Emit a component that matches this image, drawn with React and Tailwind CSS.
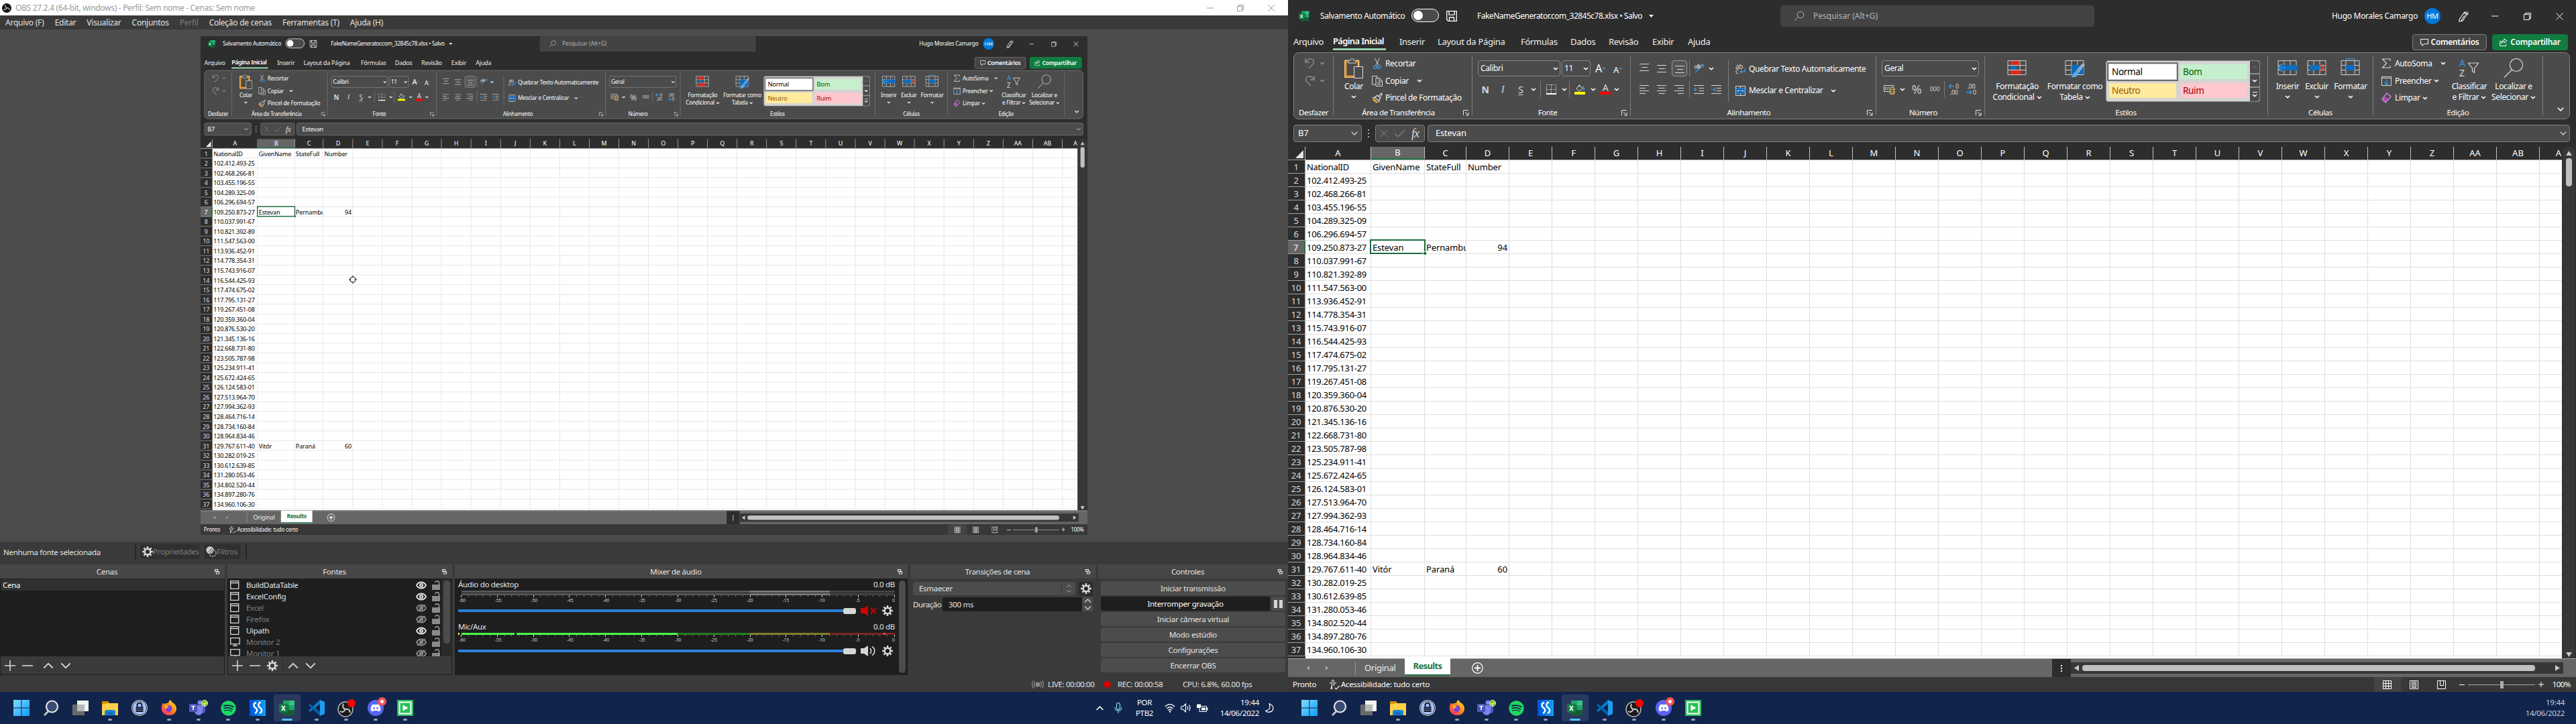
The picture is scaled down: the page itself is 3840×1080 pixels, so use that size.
import React from "react";
import { FaDiscord, FaSpotify } from "react-icons/fa";

const IDS = [
  "NationalID", "102.412.493-25", "102.468.266-81", "103.455.196-55", "104.289.325-09", "106.296.694-57",
  "109.250.873-27", "110.037.991-67", "110.821.392-89", "111.547.563-00", "113.936.452-91", "114.778.354-31",
  "115.743.916-07", "116.544.425-93", "117.474.675-02", "117.795.131-27", "119.267.451-08", "120.359.360-04",
  "120.876.530-20", "121.345.136-16", "122.668.731-80", "123.505.787-98", "125.234.911-41", "125.672.424-65",
  "126.124.583-01", "127.513.964-70", "127.994.362-93", "128.464.716-14", "128.734.160-84", "128.964.834-46",
  "129.767.611-40", "130.282.019-25", "130.612.639-85", "131.280.053-46", "134.802.520-44", "134.897.280-76",
  "134.960.106-30",
];
const EXTRA = {
  1: ["GivenName", "StateFull", "Number"],
  7: ["Estevan", "Pernambuco", "94"],
  31: ["Vitór", "Paraná", "60"],
};
const REST = "EFGHIJKLMNOPQRSTUVWXYZ".split("").concat(["AA", "AB"]);

/* ---------- small glyphs ---------- */

function Svg({ w = 16, h = 16, box, children, className = "" }) {
  return (
    <svg width={w} height={h} viewBox={box || `0 0 ${w} ${h}`} fill="none" className={"shrink-0 " + className}>
      {children}
    </svg>
  );
}
function Caret({ color = "#fff", className = "" }) {
  return (
    <Svg w={8} h={5} className={className}>
      <path d="M1 1l3 2.600L7 1" stroke={color} strokeWidth="1.600" />
    </Svg>
  );
}
function Chevron({ up, color = "#d0d0d0", w = 10, h = 6, sw = 1.3 }) {
  return (
    <Svg w={w} h={h} box="0 0 10 6">
      <path d={up ? "M.8 5.200L5 1l4.200 4.200" : "M.8.8L5 5 9.200.8"} stroke={color} strokeWidth={sw} />
    </Svg>
  );
}
function Launcher() {
  return (
    <Svg w={9} h={9}>
      <path d="M.5 8V.5H8M3 3l4.500 4.500M8 4v4H4" stroke="#e8e8e8" />
    </Svg>
  );
}
function Undo({ flip }) {
  return (
    <Svg w={15} h={17} className={flip ? "-scale-x-100" : ""}>
      <path d="M1 1v6h6M1.500 6.500C4 2.500 8 .5 11 2.500c3 2 3 5.500.5 8L6 16" stroke="#8e8e8e" strokeWidth="1.400" />
    </Svg>
  );
}
function ExcelIcon({ s = 16 }) {
  return (
    <Svg w={s} h={s} box="0 0 24 24">
      <path d="M6 1h17v22H6z" fill="#185c37" />
      <path d="M6 1h9v7H6z" fill="#21a366" /><path d="M15 1h8v7h-8z" fill="#33c481" />
      <path d="M15 8h8v7h-8z" fill="#21a366" /><path d="M6 8h9v7H6z" fill="#107c41" />
      <rect y="6" width="13" height="13" rx="1" fill="#107c41" />
      <path d="M4 9l5 7M9 9l-5 7" stroke="#fff" strokeWidth="1.800" />
    </Svg>
  );
}
function AlignLines({ kind }) {
  const d = {
    top: "M0 1.500h14M3 6.500h9M0 11.500h14",
    left: "M0 .5h14M0 4.500h9M0 8.500h14M0 12.500h9",
    center: "M0 .5h14M2.500 4.500h9M0 8.500h14M2.500 12.500h9",
    right: "M0 .5h14M5 4.500h9M0 8.500h14M5 12.500h9",
  }[kind];
  return <Svg w={14} h={13}><path d={d} stroke="#d8d8d8" /></Svg>;
}
function IndentIcon({ right }) {
  return (
    <Svg w={15} h={14}>
      <path d="M0 1.500h15M8 5.500h7M8 9.500h7M0 13.500h15" stroke="#d8d8d8" />
      <path d={right ? "M0 7.500h6M4 5l2.500 2.500L4 10" : "M6.500 7.500h-6M3 5L.5 7.500 3 10"} stroke="#3a96dd" strokeWidth="1.200" />
    </Svg>
  );
}
function TableGrid({ children, w = 30, h = 28 }) {
  return (
    <Svg w={w} h={h}>
      <path d="M1 3.500h27v21H1zM1 10.500h27M1 17.500h27M10 3.500v21M19 3.500v21" stroke="#d0d0d0" />
      {children}
    </Svg>
  );
}
function Popout() {
  return (
    <Svg w={9} h={9}>
      <path d="M1.500 1.500h4v3h-4zM3.500 4.500h4v3.500h-4z" stroke="#d6d6d6" strokeWidth="1.200" />
      <path d="M1 1h5v1.500H1zM3 4h5v1.500H3z" fill="#d6d6d6" />
    </Svg>
  );
}
function Gear({ s = 16 }) {
  return (
    <Svg w={s} h={s} box="0 0 16 16">
      <circle cx="8" cy="8" r="4.300" stroke="#d6d6d6" strokeWidth="2.400" />
      <path d="M8 0v3M8 13v3M0 8h3M13 8h3M2.400 2.400l2 2M11.600 11.600l2 2M13.600 2.400l-2 2M4.400 11.600l-2 2" stroke="#d6d6d6" strokeWidth="2.600" />
    </Svg>
  );
}

/* ---------- Excel ---------- */

function TitleBar() {
  return (
    <div className="flex h-12 items-center pl-4 text-[12px] tracking-[-0.38px] text-white">
      <ExcelIcon />
      <span className="ml-4 w-[136px]">Salvamento Automático</span>
      <span className="mt-[-2px] flex h-5 w-[41px] items-center rounded-full border border-white bg-[#4a4a4a] pl-[2px]">
        <i className="h-[14px] w-[14px] rounded-full bg-white" />
      </span>
      <Svg className="ml-[11px]">
        <path d="M.7.7h14.600v14.600H2.700l-2-2zM4 .7v5.500h8V.7M4.500 15v-5h7v5" stroke="#fff" strokeWidth="1.300" />
      </Svg>
      <span className="ml-[30px] w-[254px] tracking-[-0.5px]">FakeNameGenerator.com_32845c78.xlsx • Salvo</span>
      <Svg w={7} h={4} className="ml-[2px]"><path d="M0 0h7L3.500 4z" fill="#fff" /></Svg>
      <div className="ml-[189px] flex h-8 w-[468px] items-center rounded bg-[#434343] pl-[20px] tracking-normal text-[#b4b4b4]">
        <Svg w={16} h={16}>
          <circle cx="10" cy="6" r="4.800" stroke="#b4b4b4" /><path d="M6.500 9.500L1 15" stroke="#b4b4b4" />
        </Svg>
        <span className="ml-[13px] text-[12px]">Pesquisar (Alt+G)</span>
      </div>
      <span className="ml-[354px] w-[138px] tracking-[-0.3px]">Hugo Morales Camargo</span>
      <span className="flex h-6 w-6 items-center justify-center rounded-full bg-[#0078d7] text-[11px]">HM</span>
      <Svg w={17} h={17} className="ml-[26px]">
        <path d="M2 13L9 3l4 3-6 9-5 1zM9 3l2-1 4 3-2 1M14 1v1M16 3h-1M4 16l6-9" stroke="#fff" strokeWidth="1.100" />
      </Svg>
      <Svg w={10} h={2} className="ml-[33px]"><path d="M0 1h10" stroke="#fff" /></Svg>
      <Svg w={11} h={11} className="ml-[38px]">
        <path d="M.5 2.500h8v8h-8zM2.500 2V.5h8v8H9" stroke="#fff" />
      </Svg>
      <Svg w={11} h={11} className="ml-[37px]"><path d="M.5.5l10 10M10.500.5l-10 10" stroke="#fff" /></Svg>
    </div>
  );
}

function RibbonTabs() {
  return (
    <div className="flex h-[30px] items-center pl-2 text-[13px] tracking-[-0.3px] text-[#f0f0f0]">
      <span className="w-[59px]">Arquivo</span>
      <span className="flex h-[27px] w-[79px] items-center self-start border-b-[3px] border-[#94d1ab] pt-[4px] font-semibold tracking-[-0.65px] text-white whitespace-nowrap">Página Inicial</span>
      <span className="ml-5 w-[57px]">Inserir</span>
      <span className="w-[124px]">Layout da Página</span>
      <span className="w-[74px]">Fórmulas</span>
      <span className="w-[57px]">Dados</span>
      <span className="w-[65px]">Revisão</span>
      <span className="w-[53px]">Exibir</span>
      <span>Ajuda</span>
      <div className="ml-auto mr-[12px] flex gap-2 self-start pt-[3px] text-[12px] font-semibold tracking-[-0.3px] text-white">
        <span className="flex h-6 w-[111px] items-center justify-center gap-1 rounded border border-[#7d7d7d] bg-[#444]">
          <Svg w={12} h={12}><path d="M.5 1.500h11v7H6l-3 3v-3H.5z" stroke="#fff" /></Svg>Comentários
        </span>
        <span className="flex h-6 w-[113px] items-center justify-center gap-1 rounded bg-[#107c41]">
          <Svg w={12} h={12}><path d="M3 4.500H.7v7h9V9M7 1l4 3-4 3V5C5 5 4 6 3 8c0-3 1.500-5 4-5z" stroke="#fff" /></Svg>Compartilhar
        </span>
      </div>
    </div>
  );
}

function Group({ label, className, launcher, shift = "", children }) {
  return (
    <div className={"flex h-[98px] shrink-0 flex-col " + className}>
      <div className="flex h-[80px]">{children}</div>
      <div className="flex h-[18px] items-center justify-center text-[11.5px] tracking-[-0.42px]">
        <span className={"flex-1 text-center " + shift}>{label}</span>
        {launcher && <span className="mr-[4px]"><Launcher /></span>}
      </div>
    </div>
  );
}
function Divider() {
  return <div className="mt-1 h-[89px] w-px shrink-0 bg-[#7c7c7c]" />;
}
function Small({ icon, text, caret, gap = "ml-2" }) {
  return (
    <div className="flex h-[26px] items-center whitespace-nowrap">
      <span className="flex w-5 shrink-0">{icon}</span>
      {text}
      {caret && <Caret className={gap} />}
    </div>
  );
}
function Big({ icon, lines, caretInline, className }) {
  return (
    <div className={"flex shrink-0 flex-col items-center whitespace-nowrap pt-[8px] " + className}>
      <div className="flex h-[34px] items-start">{icon}</div>
      <div className="h-[16px] leading-[16px]">{lines[0]}</div>
      {caretInline ? (
        <div className="flex h-[16px] items-center gap-[3px] leading-[16px]">{lines[1]}<Caret /></div>
      ) : (
        <div className="pt-[5px]"><Caret /></div>
      )}
    </div>
  );
}
function Combo({ text, className }) {
  return (
    <div className={"flex h-6 shrink-0 items-center justify-between rounded border border-[#858585] pl-[3px] pr-[2px] " + className}>
      {text}<Caret />
    </div>
  );
}
function Vr() {
  return <i className="h-6 w-px shrink-0 bg-[#7c7c7c]" />;
}
function Cell({ w, children }) {
  return <span className={"flex shrink-0 items-center justify-center " + w}>{children}</span>;
}

function Ribbon() {
  return (
    <div className="ml-2 flex h-[100px] w-[1903px] rounded-lg border border-[#808080] bg-[#4b4b4b] text-[12px] tracking-[-0.36px] text-white">
      <Group label="Desfazer" className="w-[58px]">
        <div className="flex flex-col gap-[9px] pl-4 pt-[7px]">
          <div className="flex items-center gap-[7px]"><Undo /><Caret color="#8e8e8e" /></div>
          <div className="flex items-center gap-[7px]"><Undo flip /><Caret color="#8e8e8e" /></div>
        </div>
      </Group>
      <Divider />
      <Group label="Área de Transferência" launcher className="w-[206px]">
        <Big className="ml-[8px] w-[44px]" lines={["Colar"]} icon={
          <Svg w={28} h={30}>
            <path d="M2 4.500h19V27H2z" stroke="#e8962e" strokeWidth="3" />
            <path d="M.6 3h20.800v9M.6 3v25.500H14" stroke="#f5cd84" />
            <path d="M6 7V3h3c.5-3.500 4.500-3.500 5 0h3v4z" fill="#4b4b4b" stroke="#a8a8a8" strokeWidth="1.300" />
            <path d="M14.500 12.500h13v17h-13z" fill="#4b4b4b" stroke="#e0e0e0" />
          </Svg>
        } />
        <div className="ml-[5px] flex flex-col pt-[3px]">
          <Small text="Recortar" icon={
            <Svg><path d="M4.500 0l6 11M11.500 0l-6 11" stroke="#d0d0d0" /><circle cx="5" cy="13" r="2.200" stroke="#3a96dd" strokeWidth="1.300" /><circle cx="11" cy="13" r="2.200" stroke="#3a96dd" strokeWidth="1.300" /></Svg>
          } />
          <Small text="Copiar" caret gap="ml-3" icon={
            <Svg><path d="M6 13H.5V.5H8V3M6 3.500h5.500l4 4v8H6zM11 4v4h4M8 10h5M8 12.500h5" stroke="#d8d8d8" /></Svg>
          } />
          <Small text="Pincel de Formatação" icon={
            <Svg><path d="M2 8l7 6-2 2-6-5z" fill="#f0a33a" /><path d="M1 8l3-1 7 6-1.500 1.500M5 7l3-3 2 2 4-5 1.500 1.500-4 5 1.500 1-2.500 3" stroke="#e0e0e0" strokeWidth="1.200" /></Svg>
          } />
        </div>
      </Group>
      <Divider />
      <Group label="Fonte" launcher className="w-[235px]" shift="pl-[2px]">
        <div className="flex flex-col pt-[11px] pl-[8px]">
          <div className="flex items-center">
            <Combo text="Calibri" className="w-[123px]" />
            <Combo text="11" className="ml-[2px] w-[43px]" />
            <Cell w="w-[18px] ml-[6px]"><span className="text-[16px] leading-none">A</span><Chevron up color="#3a96dd" w={6} h={4} sw={2} /></Cell>
            <Cell w="w-[16px] ml-[9px]"><span className="pt-1 text-[13px] leading-none">A</span><Chevron color="#3a96dd" w={6} h={4} sw={2} /></Cell>
          </div>
          <div className="mt-[7px] flex h-6 items-center text-[14px] text-[#d8d8d8]">
            <Cell w="w-[22px] font-bold">N</Cell>
            <Cell w="w-[30px]"><em className="font-['Liberation_Serif',serif] text-[15px]">I</em></Cell>
            <Cell w="w-[24px] underline underline-offset-2">S</Cell>
            <Cell w="w-[13px]"><Caret /></Cell>
            <span className="w-[4px]" /><Vr />
            <Cell w="w-[30px]"><Svg w={15} h={15}><path d="M0 .5h15M.5 0v14M14.500 0v14M7.500 0v14M0 7.500h15" stroke="#d8d8d8" strokeDasharray="1 1" /><path d="M0 14h15" stroke="#fff" strokeWidth="2" /></Svg></Cell>
            <Cell w="w-[9px]"><Caret /></Cell>
            <span className="w-[3px]" /><Vr />
            <Cell w="w-[30px]"><Svg w={16} h={16}><path d="M3 7l4.500-5L12 7l-5 4.500zM7 1v4" stroke="#e0e0e0" /><path d="M12 4c2 1 2.500 3 2 6" stroke="#3a96dd" strokeWidth="2" /><path d="M0 12h16v4H0z" fill="#ff0" /></Svg></Cell>
            <Cell w="w-[10px]"><Caret /></Cell>
            <Cell w="w-[16px] ml-[5px] flex-col"><span className="text-[14px] leading-[12px]">A</span><i className="h-1 w-4 bg-[#f00]" /></Cell>
            <Cell w="w-[10px] ml-[4px]"><Caret /></Cell>
          </div>
        </div>
      </Group>
      <Divider />
      <Group label="Alinhamento" launcher className="w-[365px]">
        <div className="flex w-[145px] flex-col pl-[13px] pt-[11px]">
          <div className="flex items-center">
            <span className="mb-1 mr-[12px]"><AlignLines kind="top" /></span>
            <span className="mr-[8px]"><AlignLines kind="top" /></span>
            <span className="flex h-6 w-[23px] items-end justify-center rounded border border-[#9a9a9a] bg-[#555] pb-[3px]"><AlignLines kind="top" /></span>
            <span className="w-[3px]" /><Vr />
            <Svg w={18} h={16} className="ml-[6px]"><path d="M2 14L14 3M10 2.500h4.500V7" stroke="#3a96dd" strokeWidth="1.300" /><circle cx="3" cy="6" r="2" stroke="#d8d8d8" /><path d="M5 3l2 6M6 1l3 7" stroke="#d8d8d8" /><circle cx="8.500" cy="5" r="1.800" stroke="#d8d8d8" /></Svg>
            <Caret className="ml-[4px]" />
          </div>
          <div className="mt-[7px] flex h-6 items-center">
            <span className="mr-[12px]"><AlignLines kind="left" /></span>
            <span className="mr-[12px]"><AlignLines kind="center" /></span>
            <span className="mr-[8px]"><AlignLines kind="right" /></span>
            <Vr />
            <span className="ml-[6px] mr-[11px]"><IndentIcon /></span>
            <IndentIcon right />
          </div>
        </div>
        <i className="mt-[10px] h-[62px] w-px bg-[#7c7c7c]" />
        <div className="flex flex-col gap-[6px] pl-[10px] pt-[11px]">
          <Small text="Quebrar Texto Automaticamente" icon={
            <Svg w={15} h={16} className="overflow-visible"><text x="0" y="8" fontSize="10" fill="#d8d8d8">ab</text><text x="0" y="15" fontSize="10" fill="#d8d8d8">c</text><path d="M14 7v5H7M9.500 9.500L7 12l2.500 2.500" stroke="#3a96dd" strokeWidth="1.400" /></Svg>
          } />
          <Small text="Mesclar e Centralizar" caret gap="ml-[12px]" icon={
            <Svg w={15} h={15}><path d="M.5.5h14v14H.5zM7.500.5v3M7.500 11.500v3" stroke="#d8d8d8" /><path d="M1 3.500h13v8H1z" fill="#0f5fa8" stroke="#3a96dd" /><path d="M3 7.500h9M5 5.500l-2 2 2 2M10 5.500l2 2-2 2" stroke="#9cd0f5" /></Svg>
          } />
        </div>
      </Group>
      <Divider />
      <Group label="Número" launcher className="w-[161px]" shift="-ml-2">
        <div className="flex flex-col pl-[8px] pt-[11px]">
          <Combo text="Geral" className="w-[145px]" />
          <div className="mt-[7px] flex h-6 items-center text-[#c8c8c8]">
            <Svg w={18} h={16} className="ml-[3px]"><path d="M15 5V2.500H.5v9H8M4 5.500H2.500v3H4M6 5v4M9 5H7.500M12 5h1" stroke="#d8d8d8" /><path d="M9 7v7c0 2 7 2 7 0V7" fill="#4b4b4b" stroke="#f0c869" /><ellipse cx="12.500" cy="7" rx="3.500" ry="1.500" stroke="#f0c869" /><path d="M9 10c0 2 7 2 7 0M9 12.500c0 2 7 2 7 0" stroke="#f0c869" /></Svg>
            <Caret className="ml-[6px]" />
            <Cell w="w-[18px] ml-[8px] text-[18px]">%</Cell>
            <Cell w="w-[18px] ml-[9px] text-[9px]">000</Cell>
            <span className="w-[5px]" /><Vr />
            <Svg w={17} h={18} className="ml-[6px] overflow-visible"><path d="M8 4.500H.5M3.500 1.500l-3 3 3 3" stroke="#3a96dd" strokeWidth="1.400" /><text x="10" y="8" fontSize="9" fill="#d8d8d8">0</text><text x="2" y="17" fontSize="9" fill="#d8d8d8">,00</text></Svg>
            <Svg w={17} h={18} className="ml-[9px] overflow-visible"><path d="M0 13.500h8M5 10.500l3 3-3 3" stroke="#3a96dd" strokeWidth="1.400" /><text x="10" y="17" fontSize="9" fill="#d8d8d8">0</text><text x="2" y="8" fontSize="9" fill="#d8d8d8">,00</text></Svg>
          </div>
        </div>
      </Group>
      <Divider />
      <Group label="Estilos" className="w-[421px]" shift="-ml-[1px]">
        <Big className="ml-[6px] w-[84px]" lines={["Formatação", "Condicional"]} caretInline icon={
          <TableGrid><path d="M5 4h13v6H5zM5 18h16v6H5z" fill="#d92b1f" /><path d="M5 11h9v6H5z" fill="#0f6cbd" /></TableGrid>
        } />
        <Big className="w-[88px]" lines={["Formatar como", "Tabela"]} caretInline icon={
          <TableGrid w={31} h={30}><path d="M10 10h18v14H10z" fill="#0f6cbd" /><path d="M29 9l-10 13M27 8L17 20" stroke="#d8d8d8" strokeWidth="1.300" /><path d="M16 20l4 3c-2 5-6 6-11 5 3-1 4-7 7-8z" fill="#5aaef0" /></TableGrid>
        } />
        <div className="ml-[2px] mt-[11px] flex h-[62px] w-[230px] rounded border border-[#8a8a8a] bg-[#d4d4d4] text-[13.5px]">
          <div className="grid w-[214px] grid-cols-2 gap-x-[6px] gap-y-[6px] py-[5px] pl-[4px] pr-[4px] leading-[22px]">
            <span className="h-[22px] bg-white pl-[4px] text-black outline-2 outline-offset-1 outline-[#6c6c6c]">Normal</span>
            <span className="h-[22px] bg-[#c6efce] pl-[4px] text-[#006100]">Bom</span>
            <span className="h-[22px] bg-[#ffeb9c] pl-[4px] text-[#9c5700]">Neutro</span>
            <span className="h-[22px] bg-[#ffc7ce] pl-[4px] text-[#9c0006]">Ruim</span>
          </div>
          <div className="flex flex-1 flex-col items-center rounded-r bg-[#4b4b4b]">
            <span className="flex h-5 w-full items-center justify-center border-b-2 border-[#909090]"><Chevron up color="#8a8a8a" w={7} h={5} /></span>
            <span className="flex h-5 w-full items-center justify-center border-b-2 border-[#909090]"><Caret /></span>
            <span className="flex h-5 flex-col items-center justify-center gap-[2px]"><i className="h-px w-[7px] bg-white" /><Caret /></span>
          </div>
        </div>
      </Group>
      <Divider />
      <Group label="Células" className="w-[156px]">
        <Big className="ml-[7px] w-[44px]" lines={["Inserir"]} icon={
          <TableGrid><path d="M4 10h26v8H4z" fill="#0f6cbd" /><path d="M12 14H1M7 8l-6 6 6 6" stroke="#3a96dd" strokeWidth="1.500" /></TableGrid>
        } />
        <Big className="w-[43px]" lines={["Excluir"]} icon={
          <TableGrid><path d="M4 10h15v8H4z" fill="#0f6cbd" /><path d="M18 8l11 13M29 8L18 21" stroke="#e04a3f" strokeWidth="1.500" /></TableGrid>
        } />
        <Big className="ml-[2px] w-[54px]" lines={["Formatar"]} icon={
          <Svg w={30} h={30}><path d="M1 3.500h27v21H1zM1 10.500h27M1 17.500h27M8 3.500v21M21 3.500v21" stroke="#d0d0d0" /><path d="M8 10h13v8H8z" fill="#0f6cbd" /><path d="M7 .8h15" stroke="#3a96dd" strokeWidth="1.300" /></Svg>
        } />
      </Group>
      <Divider />
      <Group label="Edição" className="w-[252px]">
        <div className="flex w-[99px] flex-col pl-[12px] pt-[3px]">
          <Small text="AutoSoma" caret gap="ml-3" icon={<Svg><path d="M13 4V1H1.500l6 6.500-6 6.500H13v-3" stroke="#d8d8d8" strokeWidth="1.200" /></Svg>} />
          <Small text="Preencher" caret gap="ml-[3px]" icon={<Svg><path d="M.5 1v13.500h14V1M.5 3.500h14M.5 1.500h14" stroke="#d8d8d8" /><path d="M7.500 5v8M4.500 10l3 3 3-3" stroke="#3a96dd" strokeWidth="1.300" /></Svg>} />
          <Small text="Limpar" caret gap="ml-[3px]" icon={<Svg><path d="M1 10l3 4 7-3-5-5z" fill="#b146c2" /><path d="M8 1l6 5-8 9-5-5z" stroke="#d18adf" strokeWidth="1.300" /></Svg>} />
        </div>
        <Big className="ml-[12px] w-[64px]" lines={["Classificar", "e Filtrar"]} caretInline icon={
          <Svg w={30} h={28} className="overflow-visible"><text x="0" y="12" fontSize="14" fill="#3a96dd">A</text><text x="0" y="27" fontSize="14" fill="#d8d8d8">Z</text><path d="M13.500 7h15l-6 8v6.500l-3-2V15z" stroke="#d8d8d8" strokeWidth="1.200" /></Svg>
        } />
        <Big className="w-[68px]" lines={["Localizar e", "Selecionar"]} caretInline icon={
          <Svg w={30} h={30}><circle cx="19" cy="10" r="9.500" stroke="#d8d8d8" strokeWidth="1.200" /><path d="M12.500 17L1 28.500" stroke="#d8d8d8" strokeWidth="1.200" /></Svg>
        } />
      </Group>
      <Divider />
      <div className="flex flex-1 items-end justify-center pb-[11px] pl-[12px]"><Chevron color="#fff" sw={1.6} /></div>
    </div>
  );
}

function FormulaBar() {
  return (
    <div className="flex h-[41px] items-start pl-2 pt-2 text-[13px] tracking-[-0.2px] text-white">
      <div className="flex h-[26px] w-[102px] items-center justify-between rounded border border-[#7c7c7c] bg-[#4b4b4b] pl-[6px] pr-[5px]">B7<Chevron /></div>
      <div className="flex h-[26px] w-5 flex-col items-center justify-center gap-[3px]">
        <i className="h-[2px] w-[2px] bg-[#aaa]" /><i className="h-[2px] w-[2px] bg-[#aaa]" /><i className="h-[2px] w-[2px] bg-[#aaa]" />
      </div>
      <div className="flex h-[26px] w-[74px] items-center gap-[9px] rounded border border-[#7c7c7c] bg-[#4b4b4b] pl-[6px]">
        <Svg w={12} h={12}><path d="M.5.5l11 11M11.500.5l-11 11" stroke="#858585" /></Svg>
        <Svg w={17} h={12}><path d="M1 6l5 5L16 1" stroke="#858585" strokeWidth="1.200" /></Svg>
        <em className="font-['Liberation_Serif',serif] text-[18px] leading-none tracking-[-1px] text-[#ddd]">fx</em>
      </div>
      <div className="ml-1 flex h-[26px] w-[1703px] items-center justify-between rounded border border-[#7c7c7c] bg-[#4b4b4b] pl-[11px] pr-[4px]">Estevan<Chevron /></div>
    </div>
  );
}

const HEAD = "flex h-full shrink-0 items-center justify-center border-r border-[#c4c4c4] ";
const CELL = "h-full shrink-0 overflow-hidden border-r border-[#dedede] pl-[2px] ";

function SheetRow({ n }) {
  const x = EXTRA[n] || ["", "", ""];
  const sel = n === 7;
  return (
    <div className="flex h-5 border-b border-[#dedede] leading-[20px]">
      <span className={"-mb-px flex w-[26px] shrink-0 items-center justify-center border-b pr-px text-[13px] " + (sel ? "border-r-2 border-b-[#a0a0a0] border-r-[#217346] bg-[#666] text-white" : "border-r border-[#a0a0a0] bg-[#2d2d2d] text-[#ddd]")}>{n}</span>
      <span className={CELL + "w-[98px]"}>{IDS[n - 1]}</span>
      <span className="relative w-[80px] shrink-0 border-r border-[#dedede] pl-[2px] tracking-[-0.12px]">
        {x[0]}
        {sel && (
          <i className="absolute -left-[2px] -top-[2px] h-[22px] w-[83px] border-2 border-[#1a6b3e]">
            <b className="absolute -bottom-[3px] -right-[3px] h-[5px] w-[5px] border-l border-t border-white bg-[#1a6b3e]" />
          </i>
        )}
      </span>
      <span className={CELL + "w-[62px] tracking-[-0.12px]"}>{x[1]}</span>
      <span className={CELL + "w-[64px] tracking-[-0.12px] " + (n === 1 ? "" : "pr-[2px] text-right")}>{x[2]}</span>
      {REST.map((c) => <span key={c} className={CELL + "w-[64px]"} />)}
    </div>
  );
}

function Sheet() {
  return (
    <div className="flex h-[763px] bg-[#2d2d2d]">
      <div className="w-[1899px] overflow-hidden">
        <div className="flex h-5 border-b border-[#a0a0a0] text-[13px] text-white">
          <span className={HEAD + "w-[26px]"}>
            <Svg w={12} h={12} className="ml-[8px] mt-[3px]"><path d="M12 0v12H0z" fill="#e8e8e8" /></Svg>
          </span>
          <span className={HEAD + "w-[98px]"}>A</span>
          <span className={HEAD + "w-[80px] border-b-2 border-b-[#217346] bg-[#666]"}>B</span>
          <span className={HEAD + "w-[62px]"}>C</span>
          <span className={HEAD + "w-[64px]"}>D</span>
          {REST.map((c) => <span key={c} className={HEAD + "w-[64px]"}>{c}</span>)}
          <span className="flex h-full w-[33px] shrink-0 items-center justify-end pr-px">A</span>
        </div>
        <div className="h-[743px] overflow-hidden bg-white text-[13px] tracking-[-0.28px] text-black">
          {IDS.map((_, i) => <SheetRow key={i} n={i + 1} />)}
          <div className="flex h-5"><span className="w-[26px] bg-[#2d2d2d]" /></div>
        </div>
      </div>
      <div className="ml-px flex w-[19px] flex-col items-center rounded-t-lg bg-[#373737] pt-[6px]">
        <Svg w={9} h={7}><path d="M4.500 0L9 7H0z" fill="#c8c8c8" /></Svg>
        <i className="mt-[4px] h-[42px] w-[9px] rounded bg-[#c0c0c0]" />
        <Svg w={9} h={7} className="mb-[2px] mt-auto"><path d="M4.500 7L0 0h9z" fill="#c8c8c8" /></Svg>
      </div>
    </div>
  );
}

function SheetTabs() {
  return (
    <div className="flex h-7 items-center border-t border-[#a0a0a0] bg-[#666] text-[13px] tracking-[-0.3px] text-[#eee]">
      <Svg w={4} h={7} className="ml-[28px]"><path d="M4 0v7L0 3.500z" fill="#aaa" /></Svg>
      <Svg w={4} h={7} className="ml-[24px]"><path d="M0 0v7l4-3.500z" fill="#aaa" /></Svg>
      <i className="ml-[40px] h-5 w-px bg-[#999]" />
      <span className="ml-[13px] w-[60px]">Original</span>
      <span className="-mt-px flex h-[26px] w-[68px] items-center justify-center self-start border-b-2 border-[#1a7343] bg-white font-bold tracking-[-0.65px] text-[#217346]">Results</span>
      <Svg w={17} h={17} className="ml-[32px]"><circle cx="8.500" cy="8.500" r="7.800" stroke="#fff" strokeWidth="1.200" /><path d="M8.500 4v9M4 8.500h9" stroke="#fff" strokeWidth="1.800" /></Svg>
      <div className="ml-auto flex h-full w-[28px] flex-col items-center justify-center gap-[2px] bg-[#2d2d2d]">
        <i className="h-[2px] w-[2px] bg-white" /><i className="h-[2px] w-[2px] bg-white" /><i className="h-[2px] w-[2px] bg-white" />
      </div>
      <div className="mr-[19px] flex h-[17px] w-[734px] items-center bg-[#373737] px-[5px]">
        <Svg w={7} h={9}><path d="M7 0v9L0 4.500z" fill="#c8c8c8" /></Svg>
        <i className="ml-[5px] h-[9px] w-[675px] rounded bg-[#c0c0c0]" />
        <Svg w={7} h={9} className="ml-auto"><path d="M0 0v9l7-4.500z" fill="#c8c8c8" /></Svg>
      </div>
    </div>
  );
}

function ExcelStatus() {
  return (
    <div className="flex h-[22px] items-center bg-[#383838] pl-[7px] text-[11.5px] tracking-[-0.25px] text-white">
      <span className="w-[54px]">Pronto</span>
      <Svg w={17} h={15}><circle cx="6" cy="2" r="1.700" stroke="#eee" /><path d="M1 4.500l3.500 1V14M11 4.500l-3.500 1V9M4.500 9L3 14M9 12l2 2 5-5" stroke="#eee" strokeWidth="1.200" /></Svg>
      <span className="ml-px">Acessibilidade: tudo certo</span>
      <div className="ml-auto flex h-full w-10 items-center justify-center bg-[#444]">
        <Svg w={13} h={13}><path d="M.5.5h12v12H.5zM.5 4.500h12M.5 8.500h12M4.500.5v12M8.500.5v12" stroke="#fff" /></Svg>
      </div>
      <Svg w={13} h={13} className="ml-[13px]"><path d="M.5.5h12v12H.5zM3.500 2.500h6v8h-6zM4.500 4.500h4M4.500 6.500h4M4.500 8.500h4" stroke="#fff" /></Svg>
      <Svg w={13} h={13} className="ml-[28px]"><path d="M.5.5h12v12H.5zM4.500.5v7h5v-7" stroke="#fff" /></Svg>
      <i className="ml-[20px] h-px w-2 bg-white" />
      <div className="ml-[5px] flex w-[100px] items-center">
        <i className="h-px w-[48px] bg-[#aaa]" /><i className="h-[11px] w-[5px] bg-[#aaa]" /><i className="h-px flex-1 bg-[#aaa]" />
      </div>
      <Svg w={8} h={8} className="ml-[5px]"><path d="M4 0v8M0 4h8" stroke="#fff" /></Svg>
      <span className="ml-[13px] mr-[8px] tracking-[-0.5px]">100%</span>
    </div>
  );
}

function Excel() {
  return (
    <div className="flex h-[1032px] w-[1920px] flex-col bg-[#2d2d2d] font-['Noto_Sans',sans-serif] whitespace-nowrap">
      <TitleBar />
      <RibbonTabs />
      <Ribbon />
      <FormulaBar />
      <Sheet />
      <SheetTabs />
      <ExcelStatus />
    </div>
  );
}

/* ---------- OBS ---------- */

function ObsLogo({ s = 14 }) {
  return (
    <Svg w={s} h={s} box="0 0 24 24">
      <circle cx="12" cy="12" r="11.500" fill="#111" stroke="#000" />
      <path d="M9 4c-2 4 0 8 4 8M12.500 12c4-1 6 1 6.500 5M12 12c-2 4-5 5-8 3" stroke="#ccc" strokeWidth="2.200" />
    </Svg>
  );
}

function Dock({ title, className, children }) {
  return (
    <section className={"flex h-[165px] shrink-0 flex-col " + className}>
      <h2 className="flex h-[21px] items-center bg-[#464646] pr-[7px]">
        <span className="flex-1 text-center">{title}</span><Popout />
      </h2>
      {children}
    </section>
  );
}
function ListTools({ gear }) {
  return (
    <div className="flex h-[27px] items-center gap-[10px] bg-[#3a3a3a] pl-[6px]">
      <Svg><path d="M8 0v16M0 8h16" stroke="#d6d6d6" strokeWidth="1.600" /></Svg>
      <Svg><path d="M0 8h16" stroke="#d6d6d6" strokeWidth="1.600" /></Svg>
      {gear && <Gear />}
      <i className="-mx-[3px] h-[20px] w-px bg-[#2c2c2c]" />
      <Chevron up w={16} h={10} sw={1.2} />
      <Chevron w={16} h={10} sw={1.2} />
    </div>
  );
}

const SOURCES = [
  ["BuildDataTable", true], ["ExcelConfig", true], ["Excel", false], ["Firefox", false],
  ["Uipath", true], ["Monitor 2", false], ["Monitor 1", false],
];

function SourceRow({ name, on }) {
  const monitor = name.startsWith("Monitor");
  const c = on ? "#e4e4e4" : "#8a8a8a";
  return (
    <div className={"flex h-[17px] shrink-0 items-center pl-[3px] " + (on ? "text-[#e8e8e8]" : "text-[#7f7f7f]")}>
      {monitor ? (
        <Svg w={15} h={13}><path d="M.7.700h13.600v9H.7zM4 12.300h7M7.500 10v2" stroke="#d6d6d6" strokeWidth="1.300" /></Svg>
      ) : (
        <Svg w={15} h={13}><path d="M.7.700h12v11.600H.7zM.7 3.500h12" stroke="#d6d6d6" strokeWidth="1.300" /></Svg>
      )}
      <span className="ml-[9px] flex-1">{name}</span>
      <Svg w={16} h={12}>
        <path d="M1 6c3-6 11-6 14 0-3 6-11 6-14 0z" stroke={c} strokeWidth="1.800" />
        <circle cx="8" cy="6" r="2" stroke={c} strokeWidth="2" />
        {!on && <path d="M2 11L14 1" stroke={c} strokeWidth="1.500" />}
      </Svg>
      <Svg w={13} h={14} className="ml-[8px] mr-[1px]"><path d="M0 6h12v8H0z" fill="#8a8a8a" /><path d="M5 3c0-3 5.500-3 5.500 0v4" stroke="#8a8a8a" strokeWidth="1.800" /></Svg>
    </div>
  );
}

function Channel({ name, muted }) {
  const ticks = Array.from({ length: 61 }, (_, i) => i);
  return (
    <div className="w-[651px]">
      <div className="flex h-[18px] items-center justify-between text-[#e4e4e4]"><span>{name}</span><span>0.0 dB</span></div>
      {muted ? (
        <div className="flex h-[7px] flex-col gap-px pl-[5px]">
          {[0, 1].map((k) => (
            <div key={k} className="flex h-[3px]"><i className="w-[430px] bg-[#575757]" /><i className="w-[119px] bg-[#787878]" /><i className="flex-1 bg-[#444]" /></div>
          ))}
        </div>
      ) : (
        <div className="flex h-[3px]">
          <i className="mr-[3px] w-[2px] bg-[#ff4]" /><i className="mr-[3px] w-[79px] bg-[#4cff4c]" /><i className="w-[240px] bg-[#4cff4c]" />
          <i className="w-[108px] bg-[#267f26]" /><i className="w-[119px] bg-[#7f7f26]" /><i className="w-[80px] bg-[#7f2626]" />
          <i className="w-[3px] bg-[#ff4c4c]" /><i className="flex-1 bg-[#7f2626]" />
        </div>
      )}
      <div className="flex h-[3px] items-start justify-between pl-[4px]">
        {ticks.map((t) => <i key={t} className={t % 5 ? "h-[2px] w-px bg-[#777]" : "h-[3px] w-px bg-[#ddd]"} />)}
      </div>
      <div className="-ml-[4px] -mr-[8px] flex h-[9px] justify-between text-[7px] leading-[9px] text-[#ccc]">
        {ticks.filter((t) => t % 5 === 0).map((t) => <span key={t} className="w-5 text-center">{t - 60}</span>)}
      </div>
      <div className={"flex h-[18px] items-center " + (muted ? "mt-[2px]" : "mt-[3px]")}>
        <i className="h-1 w-[574px] bg-[#2a82da]" />
        <i className="h-[9px] w-[19px] rounded-[3px] bg-[#d6d6d6]" />
        <Svg w={24} h={16} className="ml-[7px]">
          <path d="M0 4h5l6-4v16l-6-4H0z" fill={muted ? "#d20000" : "#d6d6d6"} />
          {muted ? <path d="M15 4l8 8M23 4l-8 8" stroke="#d20000" strokeWidth="1.800" /> : <path d="M14 4c2 2 2 6 0 8M17 1.500c5 3 5 10 0 13" stroke="#d6d6d6" strokeWidth="1.600" />}
        </Svg>
        <span className="ml-[8px]"><Gear /></span>
      </div>
    </div>
  );
}

const BTN = "flex h-[21px] items-center justify-center rounded-[3px] bg-[#4c4c4c] ";

function Obs() {
  return (
    <div className="flex h-[1032px] w-[1920px] flex-col bg-[#3a3a3a] font-['Noto_Sans',sans-serif] text-[11.5px] tracking-[-0.3px] whitespace-nowrap text-[#e4e4e4]">
      <div className="flex h-[23px] items-center bg-white pl-[3px] text-[12px] tracking-[-0.3px] text-[#999]">
        <ObsLogo />
        <span className="ml-[6px]">OBS 27.2.4 (64-bit, windows) - Perfil: Sem nome - Cenas: Sem nome</span>
        <Svg w={10} h={2} className="ml-auto"><path d="M0 1h10" stroke="#999" /></Svg>
        <Svg w={10} h={10} className="ml-[35px]"><path d="M.5 2.500h7v7h-7zM2.500 2V.5h7v7H8" stroke="#999" /></Svg>
        <Svg w={10} h={10} className="ml-[36px] mr-[20px]"><path d="M0 0l10 10M10 0L0 10" stroke="#999" /></Svg>
      </div>
      <div className="flex h-[21px] items-center gap-4 pl-2 text-[12px] tracking-[-0.25px]">
        <span>Arquivo (F)</span><span>Editar</span><span>Visualizar</span><span>Conjuntos</span>
        <span className="text-[#7a7a7a]">Perfil</span><span>Coleção de cenas</span><span>Ferramentas (T)</span><span>Ajuda (H)</span>
      </div>

      <div className="h-[764px] bg-[#4c4c4c] pl-[299px] pt-[10px]">
        <div className="relative h-[744px] w-[1322px] overflow-hidden">
          <div className="-mt-[5.7px] h-[749px] w-[1322px]">
            <div className="origin-top-left scale-x-[0.6885] scale-y-[0.7267]"><Excel /></div>
          </div>
          <Svg w={12} h={12} className="absolute left-[221px] top-[357px]">
            <circle cx="6" cy="6" r="4" fill="#fff" stroke="#222" strokeWidth="1.200" /><path d="M6 0v3M6 9v3M0 6h3M9 6h3" stroke="#222" />
          </Svg>
        </div>
      </div>

      <div className="flex h-[34px] items-start pl-[5px] pt-1">
        <span className="w-[196px] leading-[24px]">Nenhuma fonte selecionada</span>
        <i className="h-[22px] w-[2px] bg-[#262626]" />
        <span className="ml-[6px] flex h-[22px] w-[89px] items-center rounded bg-[#303030] pl-[3px] text-[#7f7f7f]"><Gear />Propriedades</span>
        <span className="ml-[6px] flex h-[22px] w-[55px] items-center rounded bg-[#303030] pl-[3px] text-[#7f7f7f]">
          <Svg><circle cx="6" cy="5.500" r="5.500" fill="#ccc" /><path d="M4 8l5-5M6 10l5-5M8 12l4-4" stroke="#303030" /><circle cx="10" cy="10" r="5" stroke="#ccc" strokeWidth="1.300" strokeDasharray="2 1.500" /></Svg>Filtros
        </span>
        <i className="ml-[7px] h-[22px] w-[2px] bg-[#262626]" />
      </div>

      <div className="flex gap-1">
        <Dock title="Cenas" className="w-[335px]">
          <div className="flex flex-1 flex-col border border-[#1e1e1e] bg-[#1e1e1e]">
            <div className="flex h-[17px] items-center bg-[#303030] pl-[3px] text-white">Cena</div>
            <div className="flex-1" />
            <ListTools />
          </div>
        </Dock>
        <Dock title="Fontes" className="w-[335px]">
          <div className="flex flex-1 flex-col border border-[#1e1e1e] bg-[#1e1e1e]">
            <div className="flex h-[115px]">
              <div className="flex flex-1 flex-col overflow-hidden">
                {SOURCES.map(([n, on]) => <SourceRow key={n} name={n} on={on} />)}
              </div>
              <div className="flex w-[15px] justify-center bg-[#2b2b2b] pt-[2px]"><i className="h-[94px] w-[10px] rounded-full bg-[#4c4c4c]" /></div>
            </div>
            <ListTools gear />
          </div>
        </Dock>
        <Dock title="Mixer de áudio" className="w-[675px]">
          <div className="flex flex-1 justify-between bg-[#1e1e1e] pl-[5px] pr-[3px]">
            <div className="flex flex-col gap-[6px]">
              <Channel name="Áudio do desktop" muted />
              <Channel name="Mic/Aux" />
            </div>
            <i className="mt-[3px] h-[138px] w-[10px] rounded-full bg-[#4c4c4c]" />
          </div>
        </Dock>
        <Dock title="Transições de cena" className="w-[276px]">
          <div className="flex flex-col gap-[3px] px-1 pt-[5px]">
            <div className="flex h-5 items-center">
              <span className="flex h-full w-[221px] items-center rounded-l-[3px] bg-[#4c4c4c] pl-[9px]">Esmaecer</span>
              <span className="ml-px flex h-full w-[20px] flex-col items-center justify-center gap-[4px] rounded-r-[3px] bg-[#4c4c4c]"><Chevron up w={7} h={4} /><Chevron w={7} h={4} /></span>
              <span className="ml-[5px] flex h-[21px] w-[21px] items-center justify-center rounded-[3px] bg-[#2c2c2c]"><Gear /></span>
            </div>
            <div className="flex h-[21px] items-center">
              <span className="w-[44px] tracking-[-0.45px]">Duração</span>
              <span className="flex h-full w-[208px] items-center rounded-l-[3px] bg-[#1e1e1e] pl-[9px]">300 ms</span>
              <span className="flex h-full w-4 flex-col gap-px">
                <span className="flex flex-1 items-center justify-center bg-[#4c4c4c]"><Chevron up w={11} h={6} /></span>
                <span className="flex flex-1 items-center justify-center bg-[#4c4c4c]"><Chevron w={11} h={6} /></span>
              </span>
            </div>
          </div>
        </Dock>
        <Dock title="Controles" className="w-[283px]">
          <div className="flex flex-col gap-[2px] px-1 pt-1">
            <span className={BTN}>Iniciar transmissão</span>
            <div className="flex gap-[2px]">
              <span className="flex h-[21px] flex-1 items-center justify-center rounded-[3px] bg-[#1e1e1e] text-white">Interromper gravação</span>
              <span className={BTN + "w-[21px] gap-[3px]"}><i className="h-3 w-[5px] bg-[#d6d6d6]" /><i className="h-3 w-[5px] bg-[#d6d6d6]" /></span>
            </div>
            <span className={BTN}>Iniciar câmera virtual</span>
            <span className={BTN}>Modo estúdio</span>
            <span className={BTN}>Configurações</span>
            <span className={BTN}>Encerrar OBS</span>
          </div>
        </Dock>
      </div>

      <div className="flex flex-1 items-center justify-end pr-[49px] pt-[3px]">
        <Svg w={18} h={14}><circle cx="9" cy="7" r="3.500" fill="#8a8a8a" /><path d="M5 2.500c-2 3-2 6 0 9M13 2.500c2 3 2 6 0 9M2.500 1c-2.500 4-2.500 8 0 12M15.500 1c2.500 4 2.500 8 0 12" stroke="#8a8a8a" strokeWidth="1.300" /></Svg>
        <span className="ml-[6px] w-[83px] tracking-[-0.4px]">LIVE: 00:00:00</span>
        <i className="h-[10px] w-[11px] rounded-full bg-[#d20000]" />
        <span className="ml-[10px] w-[97px] tracking-[-0.4px]">REC: 00:00:58</span>
        <span className="w-[108px]">CPU: 6.8%, 60.00 fps</span>
      </div>
    </div>
  );
}

/* ---------- taskbar ---------- */

const APPS = [
  <Svg w={24} h={24}><path d="M0 0h11.500v11.500H0zM12.500 0H24v11.500H12.500zM0 12.500h11.500V24H0zM12.500 12.500H24V24H12.500z" fill="url(#win)" /><defs><linearGradient id="win" x1="0" y1="0" x2="1" y2="1"><stop stopColor="#7fdcff" /><stop offset="1" stopColor="#0f9cff" /></linearGradient></defs></Svg>,
  <Svg w={24} h={24}><circle cx="13.500" cy="10" r="8.500" fill="#3a4a72" stroke="#e6e6e6" strokeWidth="2.200" /><path d="M8 17l-6 6" stroke="#d0d0d0" strokeWidth="2.600" /></Svg>,
  <Svg w={24} h={24}><path d="M0 7h18v16H0z" fill="#6a6a6a" /><path d="M7 1h17v16H7z" fill="#f2f2f2" /><path d="M7 7h11v10H7z" fill="#b8b8b8" /></Svg>,
  <Svg w={24} h={24}><path d="M0 2h9l2 3h12v6H0z" fill="#d89200" /><path d="M0 7l9-2h15v18H0z" fill="#ffcf48" /><path d="M4 23v-5c0-2 1-3 3-3h10c2 0 3 1 3 3v5z" fill="#1487d8" /><path d="M8 19h8v2H8z" fill="#0b5a9c" /></Svg>,
  <Svg w={24} h={24}><circle cx="12" cy="12" r="11" fill="#a9c3ff" stroke="#fff" strokeWidth="1.500" /><circle cx="12" cy="12" r="10.500" stroke="#222" /><path d="M6.500 10.500h11V18h-11z" fill="#151a2c" /><path d="M8.500 11V8c0-4.500 7-4.500 7 0v3" stroke="#151a2c" strokeWidth="2" /><path d="M7 13h10M7 15.500h10" stroke="#5b6fa8" /></Svg>,
  <Svg w={24} h={24}><defs><linearGradient id="fx" x1="1" y1="0" x2="0.200" y2="1"><stop stopColor="#fff44f" /><stop offset=".45" stopColor="#ff980e" /><stop offset="1" stopColor="#ff2b6a" /></linearGradient></defs><path d="M14 0c1 3 4 4 6 6 6 6 3 17-8 17C4 23 0 17 .7 11 1 8 2 6 3 4.500l2 2C7 5 9 4.500 11 5c0-2 1-4 3-5z" fill="url(#fx)" /><circle cx="11.500" cy="13" r="5" fill="#7a3fe0" /><path d="M5 8c4 0 5 1 7 2-1 2-4 1-4 4-2-1-3-3-3-6z" fill="#ffb02e" /></Svg>,
  <Svg w={28} h={24}><circle cx="16" cy="4" r="3.500" fill="#7b83eb" /><path d="M16 8h8v8c0 5-7 5-8 1z" fill="#5059c9" /><path d="M8 8h12v9c0 7-10 8-12 1z" fill="#7b83eb" /><path d="M0 6h12v12H0z" fill="#4b53bc" /><path d="M3 9.500h6M6 9.500V15" stroke="#fff" strokeWidth="1.700" /><circle cx="23" cy="5" r="4.500" fill="#7fba00" stroke="#fff" /><path d="M20.500 5l2 2 3-3.500" stroke="#fff" strokeWidth="1.300" /></Svg>,
  <FaSpotify size={23} color="#1ed760" />,
  <Svg w={24} h={24}><path d="M0 0h24v24H0z" fill="url(#bl)" /><defs><linearGradient id="bl"><stop stopColor="#0052d8" /><stop offset="1" stopColor="#13a0f5" /></linearGradient></defs><path d="M10 4C5 5 6 10 9 12c3 2 3 6-1 8M14 4h3M15 20c5-2 3-7 1-8-3-2-4-5-1-8" stroke="#fff" strokeWidth="2.400" /></Svg>,
  <ExcelIcon s={24} />,
  <Svg w={24} h={24}><path d="M17 0l7 3v18l-7 3V0z" fill="#1f9cf0" /><path d="M17 0v6L2 18l-2-2z" fill="#0a7acc" /><path d="M17 24v-6L2 6 0 8z" fill="#0065a9" /></Svg>,
  <Svg w={27} h={27}><circle cx="12" cy="15" r="11" fill="#1a1a1a" stroke="#b5b5b5" strokeWidth="1.500" /><path d="M9 7c-2 4 0 8 4 8M12.500 15c4-1 6 1 6 5M12 15c-2 4-5 5-8 3" stroke="#c4c4c4" strokeWidth="2" /><circle cx="21" cy="6" r="6" fill="#f00" /></Svg>,
  <span className="relative flex h-6 w-6 items-center justify-center rounded-full bg-[#5865f2]"><FaDiscord size={16} color="#fff" /><i className="absolute -right-[4px] -top-[4px] h-[13px] w-[13px] rounded-full border-4 border-[#f05555] bg-white" /></span>,
  <Svg w={24} h={24}><path d="M0 0h24v24H0z" fill="#2bbf5a" /><path d="M3.500 3.500h17v17h-17z" stroke="#fff" strokeWidth="2" /><path d="M8.500 7.500l8 4.500-8 4.500z" fill="#fff" /></Svg>,
];

function Clock({ className }) {
  return <span className={"text-right leading-[16px] " + className}>19:44<br />14/06/2022</span>;
}

function Taskbar({ tray }) {
  return (
    <div className="flex h-12 w-[1920px] items-center bg-[#11244c] pl-[10px] font-['Noto_Sans',sans-serif] text-[11.5px] tracking-[-0.3px] text-white">
      {APPS.map((icon, i) => (
        <div key={i} className="flex h-12 w-11 items-center justify-center">
          <div className={"relative flex h-10 w-10 items-center justify-center rounded " + (i === 9 ? "bg-white/10" : "")}>
            {icon}
            {(i === 3 || i > 4) && (
              <i className={"absolute bottom-px h-[3px] rounded-full " + (i === 9 ? "w-4 bg-[#4cc2ff]" : "w-[6px] bg-[#9aa3b8]")} />
            )}
          </div>
        </div>
      ))}
      {tray ? (
        <div className="ml-auto flex items-center">
          <Chevron up w={13} h={7} color="#fff" />
          <Svg w={12} h={16} className="ml-[15px]"><rect x="3.500" y=".5" width="5" height="10" rx="2.500" stroke="#7fd4f0" strokeWidth="1.200" /><path d="M1 7c0 7 10 7 10 0M6 12v4" stroke="#7fd4f0" strokeWidth="1.200" /></Svg>
          <span className="ml-[16px] w-[34px] text-center leading-[16px]">POR<br />PTB2</span>
          <Svg w={16} h={14} className="ml-[13px]"><path d="M1 5c4-4.500 10-4.500 14 0M3.500 8c3-3 6-3 9 0M5.500 10.500c1.500-1.500 3.500-1.500 5 0" stroke="#fff" strokeWidth="1.300" /><circle cx="8" cy="12.500" r="1.300" fill="#fff" /></Svg>
          <Svg w={16} h={14} className="ml-[8px]"><path d="M.5 5h3l4-4v12l-4-4h-3zM10 4.500c1 1.500 1 3.500 0 5M12.500 2.500c2 3 2 6 0 9" stroke="#fff" strokeWidth="1.200" /></Svg>
          <Svg w={17} h={13} className="ml-[8px]"><path d="M4 3.500h10.500v8H4z" stroke="#fff" /><path d="M7 5.500h6v4H7zM15 5.500h1.500v4H15zM0 1h6v5H0zM1 0h1.500v2H1zM4 0h1.500v2H4z" fill="#fff" /></Svg>
          <Clock className="ml-[12px] w-[64px]" />
          <Svg w={13} h={14} className="ml-[9px] mr-[21px]"><path d="M6 .7c8 3 8 12-1 12.600-2 0-3-.5-4.500-2C7 10 8 6 6 .7z" stroke="#fff" strokeWidth="1.200" /></Svg>
        </div>
      ) : (
        <Clock className="ml-auto mr-[17px] text-[#c8ccd6]" />
      )}
    </div>
  );
}

export default function App() {
  return (
    <div className="flex h-[1080px] w-[3840px] overflow-hidden">
      <div className="w-[1920px]"><Obs /><Taskbar tray /></div>
      <div className="w-[1920px]"><Excel /><Taskbar /></div>
    </div>
  );
}
